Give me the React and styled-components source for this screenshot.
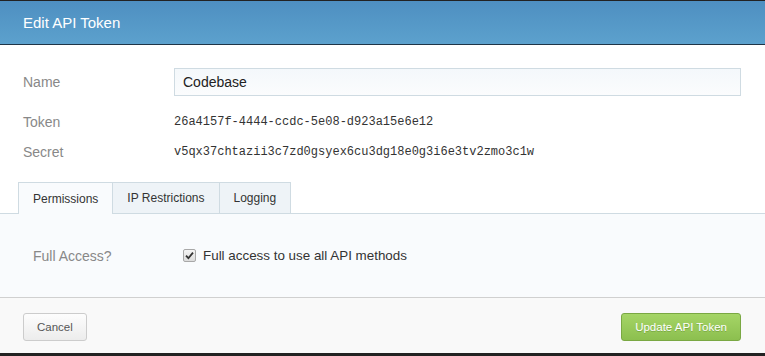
import React from 'react'
import styled, { createGlobalStyle } from 'styled-components'

const Global = createGlobalStyle`
  html, body {
    margin: 0;
    padding: 0;
    background: #222;
  }
  body {
    font-family: "Liberation Sans", Arial, sans-serif;
    color: #333;
  }
`

const Modal = styled.div`
  width: 765px;
  height: 353px;
  background: #fff;
  display: flex;
  flex-direction: column;
  overflow: hidden;
`

const Header = styled.div`
  height: 43px;
  border-top: 1px solid #222;
  border-bottom: 1px solid #1f3446;
  background: linear-gradient(#4e8fc1, #5ca1cd);
  display: flex;
  align-items: center;
  padding: 0 23px;
  flex-shrink: 0;
`

const Title = styled.h3`
  margin: 0;
  font-size: 15px;
  font-weight: normal;
  color: #fff;
`

const Fields = styled.div`
  display: grid;
  grid-template-columns: 151px 1fr;
  grid-template-rows: 39px 30px 30px;
  align-items: center;
  padding: 23px 24px 0 23px;
`

const Label = styled.div`
  font-size: 14px;
  color: #888;
  align-self: ${p => (p.top ? 'start' : 'center')};
  line-height: ${p => (p.top ? '28px' : 'normal')};
`

const Input = styled.div`
  height: 26px;
  border: 1px solid #cfdbe2;
  background: linear-gradient(#f4f8fb, #fbfcfd);
  font-size: 14px;
  color: #222;
  display: flex;
  align-items: center;
  padding: 0 8px;
  align-self: start;
`

const Code = styled.div`
  font-family: "Liberation Mono", "DejaVu Sans Mono", monospace;
  font-size: 12px;
  color: #333;
`

const Tabs = styled.div`
  display: flex;
  margin-top: 15px;
  padding-left: 18px;
  border-bottom: 1px solid #cfdbe2;
  height: 31px;
  flex-shrink: 0;
`

const Tab = styled.div`
  box-sizing: border-box;
  padding: 0 14px;
  display: flex;
  align-items: center;
  font-size: 12px;
  color: #333;
  border: 1px solid #cfdbe2;
  border-bottom: none;
  margin-left: ${p => (p.first ? '0' : '-1px')};
  background: ${p => (p.active ? '#f9fbfd' : '#eef3f7')};
  height: ${p => (p.active ? '32px' : '31px')};
  position: relative;
  z-index: ${p => (p.active ? 1 : 0)};
`

const Panel = styled.div`
  flex: 1;
  background: #f9fbfd;
  display: grid;
  grid-template-columns: 150px 1fr;
  align-items: center;
  padding: 0 33px;
  border-bottom: 1px solid #d0d0d0;
`

const Check = styled.label`
  display: flex;
  align-items: center;
  gap: 7px;
  font-size: 13.4px;
  color: #333;
`

const Box = styled.span`
  width: 11px;
  height: 11px;
  border: 1px solid #a8a8a8;
  border-radius: 2px;
  background: linear-gradient(#f4f4f4, #dcdcdc);
  display: flex;
  align-items: center;
  justify-content: center;
`

const Footer = styled.div`
  height: 55px;
  flex-shrink: 0;
  background: #f9f9f9;
  display: flex;
  align-items: center;
  justify-content: space-between;
  padding: 0 24px 0 23px;
`

const Button = styled.button`
  height: 28px;
  border-radius: 3px;
  font-family: "Liberation Sans", Arial, sans-serif;
  font-size: 11.5px;
  padding: 0 13px;
  cursor: pointer;
  border: 1px solid ${p => (p.primary ? '#7aa843' : '#ccc')};
  color: ${p => (p.primary ? '#fff' : '#555')};
  background: ${p =>
    p.primary
      ? 'linear-gradient(#a5d566, #8cbf4f)'
      : 'linear-gradient(#fdfdfd, #ececec)'};
  text-shadow: ${p => (p.primary ? '0 1px 0 rgba(70,110,30,0.35)' : 'none')};
  margin-top: 2px;
`

const Tick = () => (
  <svg width="9" height="9" viewBox="0 0 9 9">
    <path d="M1 4.6 L3.4 7.2 L8 1.6" fill="none" stroke="#333" strokeWidth="1.8" />
  </svg>
)

const App = () => (
  <>
    <Global />
    <Modal>
      <Header>
        <Title>Edit API Token</Title>
      </Header>
      <Fields>
        <Label top>Name</Label>
        <Input>Codebase</Input>
        <Label>Token</Label>
        <Code>26a4157f-4444-ccdc-5e08-d923a15e6e12</Code>
        <Label>Secret</Label>
        <Code>v5qx37chtazii3c7zd0gsyex6cu3dg18e0g3i6e3tv2zmo3c1w</Code>
      </Fields>
      <Tabs>
        <Tab first active>Permissions</Tab>
        <Tab>IP Restrictions</Tab>
        <Tab>Logging</Tab>
      </Tabs>
      <Panel>
        <Label>Full Access?</Label>
        <Check>
          <Box><Tick /></Box>
          Full access to use all API methods
        </Check>
      </Panel>
      <Footer>
        <Button>Cancel</Button>
        <Button primary>Update API Token</Button>
      </Footer>
    </Modal>
  </>
)

export default App
